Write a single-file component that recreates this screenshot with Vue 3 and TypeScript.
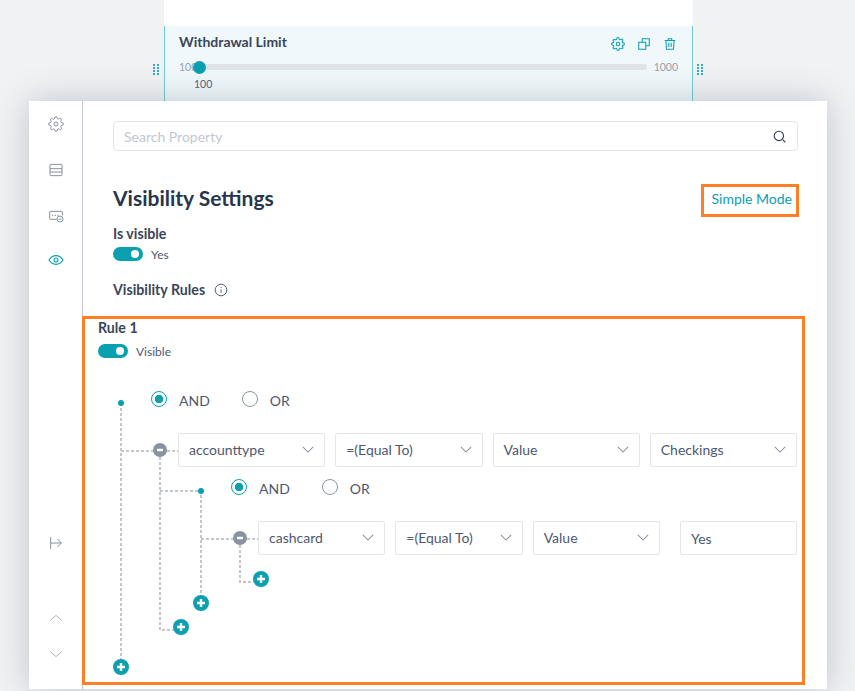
<template>
  <div class="page">
    <div class="blank-card"></div>

    <div class="widget">
      <span class="grip grip-left"><i v-for="n in 8" :key="n"></i></span>
      <span class="grip grip-right"><i v-for="n in 8" :key="n"></i></span>
      <div class="widget-head">
        <span class="widget-title">Withdrawal Limit</span>
        <div class="widget-actions">
          <svg viewBox="0 0 24 24" class="act">
            <circle cx="12" cy="12" r="3" />
            <path d="M19.4 15a1.65 1.65 0 0 0 .33 1.82l.06.06a2 2 0 1 1-2.83 2.83l-.06-.06a1.65 1.65 0 0 0-2.82 1.17V21a2 2 0 1 1-4 0v-.09a1.65 1.65 0 0 0-2.82-1.17l-.06.06a2 2 0 1 1-2.83-2.83l.06-.06a1.65 1.65 0 0 0-1.17-2.82H3a2 2 0 1 1 0-4h.09a1.65 1.65 0 0 0 1.17-2.82l-.06-.06a2 2 0 1 1 2.83-2.83l.06.06a1.65 1.65 0 0 0 2.82-1.17V3a2 2 0 1 1 4 0v.09a1.65 1.65 0 0 0 2.82 1.17l.06-.06a2 2 0 1 1 2.83 2.83l-.06.06a1.65 1.65 0 0 0 1.17 2.82H21a2 2 0 1 1 0 4h-.09a1.65 1.65 0 0 0-1.51 1.09z" />
          </svg>
          <svg viewBox="0 0 24 24" class="act">
            <rect x="3" y="9" width="12" height="12" />
            <path d="M9 9V3h12v12h-6" />
          </svg>
          <svg viewBox="0 0 24 24" class="act">
            <path d="M3 6h18M9 6V3h6v3M5 6l1 15h12l1-15M10 10v7M14 10v7" />
          </svg>
        </div>
      </div>
      <div class="slider">
        <span class="slider-min">100</span>
        <div class="slider-track"><span class="slider-knob"></span></div>
        <span class="slider-max">1000</span>
      </div>
      <span class="slider-value">100</span>
    </div>

    <div class="panel">
      <aside class="side">
        <div class="side-top">
          <svg viewBox="0 0 24 24" class="side-icon">
            <circle cx="12" cy="12" r="3" />
            <path d="M19.4 15a1.65 1.65 0 0 0 .33 1.82l.06.06a2 2 0 1 1-2.83 2.83l-.06-.06a1.65 1.65 0 0 0-2.82 1.17V21a2 2 0 1 1-4 0v-.09a1.65 1.65 0 0 0-2.82-1.17l-.06.06a2 2 0 1 1-2.83-2.83l.06-.06a1.65 1.65 0 0 0-1.17-2.82H3a2 2 0 1 1 0-4h.09a1.65 1.65 0 0 0 1.17-2.82l-.06-.06a2 2 0 1 1 2.83-2.83l.06.06a1.65 1.65 0 0 0 2.82-1.17V3a2 2 0 1 1 4 0v.09a1.65 1.65 0 0 0 2.82 1.17l.06-.06a2 2 0 1 1 2.83 2.83l-.06.06a1.65 1.65 0 0 0 1.17 2.82H21a2 2 0 1 1 0 4h-.09a1.65 1.65 0 0 0-1.51 1.09z" />
          </svg>
          <svg viewBox="0 0 24 24" class="side-icon">
            <rect x="3" y="3.500" width="18" height="17" rx="1.500" />
            <path d="M3 10h18M3 15h18" />
          </svg>
          <svg viewBox="0 0 24 24" class="side-icon">
            <path d="M13 17H3.500a1 1 0 0 1-1-1V6a1 1 0 0 1 1-1h17a1 1 0 0 1 1 1v5" />
            <path d="M6 11h2M10 11h2M14 11h2" />
            <circle cx="18" cy="16.500" r="4.500" />
            <path d="M16 16.500l1.500 1.500 2.500-3" />
          </svg>
          <svg viewBox="0 0 24 24" class="side-icon active">
            <path d="M1.500 12S5.500 5.500 12 5.500 22.500 12 22.500 12 18.500 18.500 12 18.500 1.500 12 1.500 12z" />
            <circle cx="12" cy="12" r="3" />
          </svg>
        </div>
        <div class="side-bottom">
          <svg viewBox="0 0 24 24" class="side-icon collapse">
            <path d="M4 3v18M4 12h16M14 6l6 6-6 6" />
          </svg>
          <svg viewBox="0 0 24 24" class="side-icon arrow up"><path d="M3 16l9-8 9 8" /></svg>
          <svg viewBox="0 0 24 24" class="side-icon arrow"><path d="M3 8l9 8 9-8" /></svg>
        </div>
      </aside>

      <main class="main">
        <div class="search">
          <span class="search-text">Search Property</span>
          <svg viewBox="0 0 24 24" class="search-icon">
            <circle cx="11" cy="11" r="7.500" />
            <path d="M17 17l4.500 4.500" />
          </svg>
        </div>

        <div class="title-row">
          <h1>Visibility Settings</h1>
          <a class="simple-link">Simple Mode</a>
        </div>

        <div class="label is-visible">Is visible</div>
        <div class="toggle-row">
          <span class="toggle"></span>
          <span class="toggle-text">Yes</span>
        </div>

        <div class="label rules-label">
          Visibility Rules
          <svg viewBox="0 0 24 24" class="info">
            <circle cx="12" cy="12" r="10" />
            <path d="M12 11v6M12 7v1.500" />
          </svg>
        </div>

        <section class="rule">
          <div class="label rule-name">Rule 1</div>
          <div class="toggle-row rule-toggle">
            <span class="toggle"></span>
            <span class="toggle-text">Visible</span>
          </div>

          <div class="tree">
            <svg class="lines" width="722" height="310" viewBox="98 378 722 310">
              <g class="dotted">
                <path d="M121 403V660M121 451H153M167 451H178" />
                <path d="M160 457V630H174M160 491H201V596" />
                <path d="M201 539H233M247 539H258" />
                <path d="M240 545V582H254" />
              </g>
              <circle cx="121" cy="403" r="3" class="dot" />
              <circle cx="201" cy="491" r="3" class="dot" />
              <g v-for="m in minusNodes" :key="m.x">
                <circle :cx="m.x" :cy="m.y" r="7" class="minus" />
                <path :d="`M${m.x - 3} ${m.y}h6`" class="glyph" />
              </g>
              <g v-for="p in plusNodes" :key="p.x">
                <circle :cx="p.x" :cy="p.y" r="8" class="plus" />
                <path :d="`M${p.x - 4} ${p.y}h8M${p.x} ${p.y - 4}v8`" class="glyph" />
              </g>
            </svg>

            <div class="logic first">
              <label class="radio on">AND</label>
              <label class="radio">OR</label>
            </div>
            <div class="conds">
              <div v-for="s in firstRow" :key="s" class="select wide">
                <span>{{ s }}</span>
                <svg viewBox="0 0 14 8" class="chev"><path d="M1 1l6 6 6-6" /></svg>
              </div>
            </div>
            <div class="logic second">
              <label class="radio on">AND</label>
              <label class="radio">OR</label>
            </div>
            <div class="conds nested">
              <div v-for="s in secondRow" :key="s" class="select">
                <span>{{ s }}</span>
                <svg viewBox="0 0 14 8" class="chev"><path d="M1 1l6 6 6-6" /></svg>
              </div>
              <div class="select input">Yes</div>
            </div>
          </div>
        </section>
      </main>
    </div>

    <div class="mark mark-link"></div>
    <div class="mark mark-rule"></div>
  </div>
</template>

<script setup lang="ts">
const firstRow: string[] = ['accounttype', '=(Equal To)', 'Value', 'Checkings'];
const secondRow: string[] = ['cashcard', '=(Equal To)', 'Value'];

const minusNodes = [
  { x: 160, y: 450 },
  { x: 240, y: 538 },
];
const plusNodes = [
  { x: 261, y: 579 },
  { x: 201, y: 603 },
  { x: 181, y: 627 },
  { x: 121, y: 667 },
];
</script>

<style scoped>
.page {
  position: relative;
  width: 855px;
  height: 691px;
  overflow: hidden;
  background: #f1f2f4;
  font-family: Lato, 'Open Sans', sans-serif;
  color: #2b3950;
}
.blank-card {
  width: 529px;
  height: 26px;
  margin-left: 164px;
  background: #fff;
}
.widget {
  position: relative;
  box-sizing: border-box;
  width: 529px;
  height: 75px;
  margin-left: 164px;
  padding: 8px 14px 0;
  background: #f0f8fb;
  border-left: 1px solid #6fcdd0;
  border-right: 1px solid #6fcdd0;
}
.grip {
  position: absolute;
  top: 38px;
  display: grid;
  grid-template-columns: 2px 2px;
  gap: 1px 2px;
  width: 6px;
}
.grip i {
  display: block;
  width: 2px;
  height: 2px;
  background: #3aaab5;
}
.grip-left {
  left: -12px;
}
.grip-right {
  right: -11px;
}
.widget-head {
  display: flex;
  justify-content: space-between;
  height: 19px;
}
.widget-title {
  font-size: 14px;
  font-weight: 700;
  line-height: 16px;
  color: #3a4559;
}
.widget-actions {
  display: flex;
  gap: 12px;
  margin: 3px 1px 0 0;
}
.act {
  width: 14px;
  height: 14px;
  fill: none;
  stroke: #0aa0b0;
  stroke-width: 1.800;
}
.slider {
  display: flex;
  align-items: center;
  height: 12px;
  margin-top: 8px;
  font-size: 10.500px;
  color: #979fab;
}
.slider-min {
  width: 20px;
}
.slider-track {
  position: relative;
  flex: 1;
  height: 6px;
  border-radius: 3px;
  background: #e0e3e7;
}
.slider-knob {
  position: absolute;
  left: -6px;
  top: -3.500px;
  width: 13px;
  height: 13px;
  border-radius: 50%;
  background: #0aa0b0;
}
.slider-max {
  width: 31px;
  text-align: right;
}
.slider-value {
  display: block;
  margin: 5px 0 0 15px;
  font-size: 10.500px;
  line-height: 12px;
  color: #58627a;
}
.panel {
  display: flex;
  width: 798px;
  height: 588px;
  margin-left: 29px;
  background: #fff;
  box-shadow: 0 0 32px rgba(48, 66, 84, 0.26);
  position: relative;
}
.side {
  display: flex;
  flex-direction: column;
  justify-content: space-between;
  box-sizing: border-box;
  width: 54px;
  padding: 15px 0 27px;
  border-right: 1px solid #c4c9d1;
}
.side-top,
.side-bottom {
  display: flex;
  flex-direction: column;
  align-items: center;
}
.side-top {
  gap: 30px;
}
.side-bottom {
  gap: 59px;
}
.side-icon {
  width: 16px;
  height: 16px;
  fill: none;
  stroke: #7f8896;
  stroke-width: 1.400;
}
.side-icon.active {
  stroke: #0aa0b0;
  stroke-width: 1.700;
  margin-top: -2px;
}
.side-icon.arrow {
  stroke: #a7adb8;
  margin-top: -39px;
}
.side-icon.arrow.up {
  margin-top: 0;
}
.main {
  flex: 1;
  box-sizing: border-box;
  padding: 20px 29px 0 30px;
}
.search {
  display: flex;
  align-items: center;
  justify-content: space-between;
  box-sizing: border-box;
  height: 30px;
  padding: 0 10px;
  border: 1px solid #e4e6ea;
  border-radius: 4px;
}
.search-text {
  font-size: 14px;
  color: #c3c8cf;
}
.search-icon {
  width: 15px;
  height: 15px;
  fill: none;
  stroke: #2f3c52;
  stroke-width: 1.800;
}
.title-row {
  display: flex;
  align-items: center;
  justify-content: space-between;
  height: 30px;
  margin-top: 32px;
}
h1 {
  margin: -1px 0 0;
  font-size: 21px;
  font-weight: 700;
  color: #27354d;
}
.simple-link {
  margin-right: 6px;
  font-size: 14px;
  color: #0aa0b0;
}
.label {
  font-size: 14.200px;
  font-weight: 700;
  line-height: 17px;
  color: #3a4559;
}
.is-visible {
  margin-top: 12px;
}
.toggle-row {
  display: flex;
  align-items: center;
  gap: 8px;
  height: 14px;
  margin-top: 5px;
}
.toggle {
  position: relative;
  width: 30px;
  height: 14px;
  border-radius: 7px;
  background: #0aa0b0;
}
.toggle::after {
  content: '';
  position: absolute;
  top: 3px;
  right: 4px;
  width: 8px;
  height: 8px;
  border-radius: 50%;
  background: #fff;
}
.toggle-text {
  font-size: 12px;
  color: #4d5870;
}
.rules-label {
  display: flex;
  align-items: center;
  gap: 9px;
  margin-top: 20px;
}
.info {
  width: 14px;
  height: 14px;
  fill: none;
  stroke: #4d5870;
  stroke-width: 1.600;
}
.rule {
  margin: 21px 0 0 -15px;
}
.rule-toggle {
  margin-top: 8px;
}
.tree {
  position: relative;
  display: flow-root;
  margin-top: 20px;
}
.lines {
  position: absolute;
  left: 0;
  top: 0;
}
.dotted path {
  fill: none;
  stroke: #c2c6cd;
  stroke-width: 2;
  stroke-dasharray: 3 2;
}
.dot {
  fill: #0aa0b0;
}
.minus {
  fill: #8a92a0;
}
.plus {
  fill: #0aa0b0;
}
.glyph {
  fill: none;
  stroke: #fff;
  stroke-width: 2.400;
}
.logic {
  position: relative;
  display: flex;
  gap: 32px;
  height: 24px;
  align-items: center;
  font-size: 14px;
  color: #4d5870;
}
.logic.first {
  padding-left: 53px;
  margin-top: 11px;
}
.logic.second {
  padding-left: 133px;
  margin-top: 10px;
}
.radio {
  display: flex;
  align-items: center;
  gap: 12px;
  line-height: 1;
}
.radio::before {
  content: '';
  box-sizing: border-box;
  width: 16px;
  height: 16px;
  border: 1px solid #8b93a1;
  border-radius: 50%;
  background: #fff;
  margin-top: -4px;
}
.radio.on::before {
  border: 1.500px solid #0aa0b0;
  background: radial-gradient(circle, #0aa0b0 0 4px, #fff 4.500px);
}
.conds {
  position: relative;
  display: flex;
  gap: 10px;
  margin-top: 20px;
  padding-left: 80px;
}
.nested {
  padding-left: 160px;
  margin-top: 20px;
}
.select {
  display: flex;
  align-items: center;
  justify-content: space-between;
  box-sizing: border-box;
  width: 127.330px;
  height: 34px;
  padding: 0 10px 2px;
  background: #fff;
  border: 1px solid #e4e6ea;
  border-radius: 2px;
  font-size: 14px;
  color: #4d5870;
}
.select.wide {
  width: 147.250px;
}
.select.input {
  width: 117px;
  margin-left: 10px;
  padding-bottom: 0;
}
.chev {
  width: 12px;
  height: 7px;
  fill: none;
  stroke: #8b93a1;
  stroke-width: 1.200;
}
.mark {
  position: absolute;
  box-sizing: border-box;
  border: 3px solid #ff7f24;
  pointer-events: none;
}
.mark-link {
  left: 701px;
  top: 184px;
  width: 98px;
  height: 33px;
}
.mark-rule {
  left: 82px;
  top: 316px;
  width: 723px;
  height: 369px;
}
</style>

<style>
html,
body {
  margin: 0;
}
</style>
